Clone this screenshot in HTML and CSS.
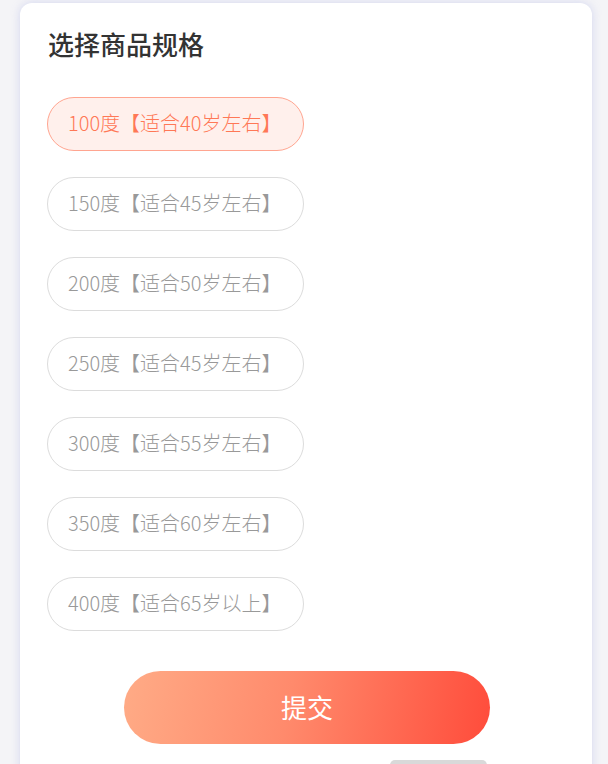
FILE: index.html
```html
<!DOCTYPE html>
<html lang="zh">
<head>
<meta charset="utf-8">
<link rel="stylesheet" href="styles.css">
</head>
<body>
<div class="page">
  <div class="card">
    <h2 class="title">选择商品规格</h2>
    <div class="options">
      <div class="opt active">100度【适合40岁左右】</div>
      <div class="opt">150度【适合45岁左右】</div>
      <div class="opt">200度【适合50岁左右】</div>
      <div class="opt">250度【适合45岁左右】</div>
      <div class="opt">300度【适合55岁左右】</div>
      <div class="opt">350度【适合60岁左右】</div>
      <div class="opt">400度【适合65岁以上】</div>
    </div>
    <div class="actions">
      <button class="submit">提交</button>
    </div>
    <div class="foot"><span class="handle"></span></div>
  </div>
</div>
</body>
</html>
```
FILE: styles.css
```css
html, body {
  margin: 0;
  padding: 0;
  height: 100%;
  overflow: hidden;
}
body {
  background: #f4f4f7;
  font-family: "Noto Sans CJK SC", "Noto Sans", sans-serif;
}
.page {
  padding: 3px 16px 0 20px;
}
.card {
  width: 572px;
  height: 800px;
  background: #fff;
  border-radius: 12px 12px 0 0;
  box-shadow: 0 0 10px rgba(170, 178, 230, 0.45);
  padding: 22px 0 0 27px;
  box-sizing: border-box;
}
.title {
  margin: 0 0 0 1px;
  font-size: 26px;
  line-height: 38px;
  font-weight: 500;
  color: #333;
}
.options {
  margin-top: 34px;
  display: flex;
  flex-direction: column;
  gap: 26px;
}
.opt {
  width: 257px;
  height: 54px;
  box-sizing: border-box;
  border: 1px solid #dcdcdc;
  border-radius: 27px;
  padding: 0 0 3px 20px;
  display: flex;
  align-items: center;
  font-size: 20px;
  font-weight: 300;
  color: #999;
}
.opt.active {
  background: #fff0ec;
  border-color: #ffa590;
  color: #ff7856;
}
.actions {
  margin-top: 40px;
  padding-left: 77px;
}
.submit {
  width: 366px;
  height: 73px;
  border: none;
  border-radius: 37px;
  background: linear-gradient(100deg, #ffab86 0%, #ff8a6c 45%, #ff4c3b 100%);
  color: #fff;
  font-family: "Noto Sans CJK SC", sans-serif;
  font-size: 26px;
  padding: 0 0 3px 0;
}
.foot {
  padding-left: 343px;
  margin-top: 16px;
}
.handle {
  display: block;
  width: 97px;
  height: 10px;
  border-radius: 5px;
  background: #d9d9d9;
}
```
